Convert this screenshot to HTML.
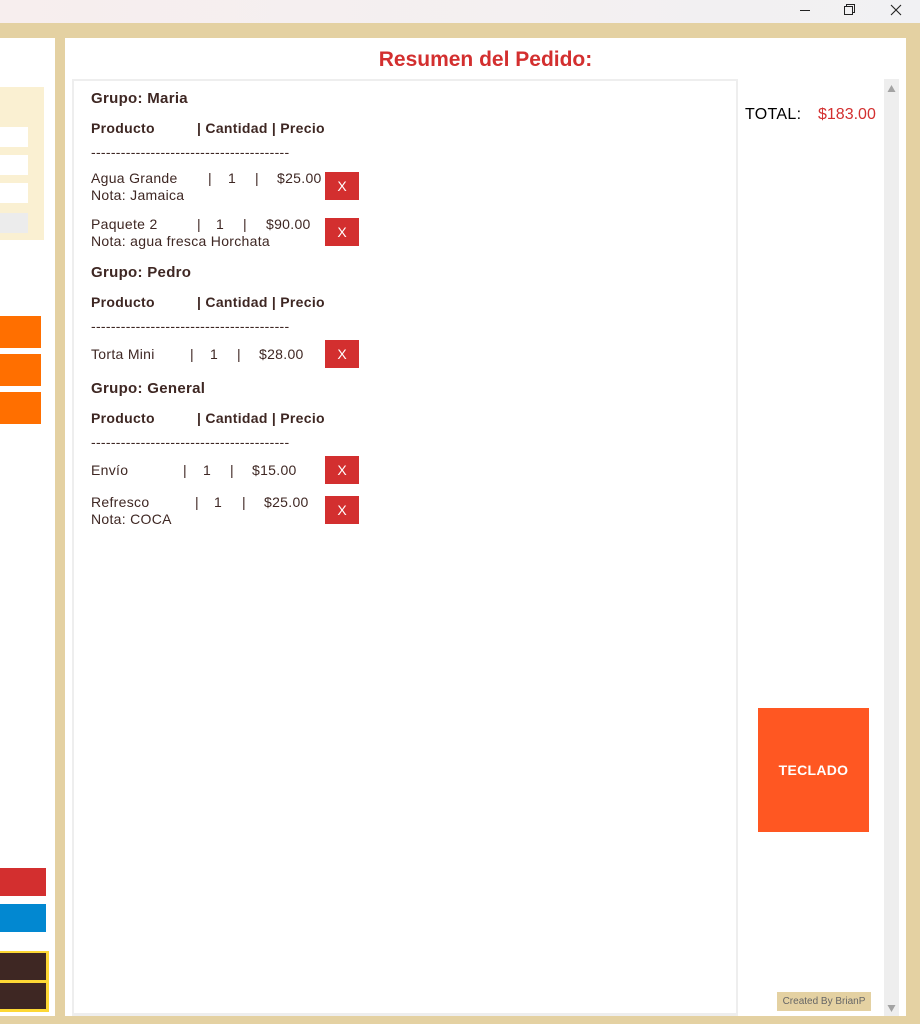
<!DOCTYPE html>
<html><head><meta charset="utf-8"><style>
*{margin:0;padding:0;box-sizing:border-box}
body{width:920px;height:1024px;position:relative;overflow:hidden;background:#e4d1a2;font-family:"Liberation Sans",sans-serif;color:#3e2723}
div,span{position:absolute}
.t{font-size:14px;line-height:16px;white-space:nowrap;letter-spacing:0.3px}
.b{font-weight:bold}
.g{font-size:15px;font-weight:bold;line-height:18px;letter-spacing:0.3px}
.x{width:34px;height:28px;background:#d32f2f;color:#fff;font-size:14px;text-align:center;line-height:29px;left:325px}
</style></head><body>
<div style="left:0;top:0;width:920px;height:23px;background:linear-gradient(90deg,#f7eeee,#f1f1f3)"></div>
<svg style="position:absolute;left:795px;top:4px" width="110" height="14">
<line x1="5" y1="6.5" x2="15" y2="6.5" stroke="#222" stroke-width="1"/>
<rect x="49.5" y="2.5" width="8" height="8" fill="none" stroke="#222"/>
<path d="M51.5 2.5V0.5H59.5V8.5H57.5" fill="none" stroke="#222"/>
<path d="M96 1L106 11M106 1L96 11" stroke="#222" stroke-width="1.1"/>
</svg>
<div style="left:0;top:38px;width:55px;height:978px;background:#fff"></div>
<div style="left:0;top:87px;width:44px;height:153px;background:#faf0d2"></div>
<div style="left:0;top:127px;width:28px;height:20px;background:#fff"></div>
<div style="left:0;top:155px;width:28px;height:20px;background:#fff"></div>
<div style="left:0;top:183px;width:28px;height:20px;background:#fff"></div>
<div style="left:0;top:213px;width:28px;height:20px;background:#ececec"></div>
<div style="left:0;top:316px;width:41px;height:32px;background:#ff6f00"></div>
<div style="left:0;top:354px;width:41px;height:32px;background:#ff6f00"></div>
<div style="left:0;top:392px;width:41px;height:32px;background:#ff6f00"></div>
<div style="left:0;top:868px;width:46px;height:28px;background:#d32f2f"></div>
<div style="left:0;top:904px;width:46px;height:28px;background:#0288d1"></div>
<div style="left:0;top:951px;width:49px;height:61px;background:#fdd835"></div>
<div style="left:0;top:953px;width:46px;height:27px;background:#3e2723"></div>
<div style="left:0;top:983px;width:46px;height:26px;background:#3e2723"></div>

<div style="left:65px;top:38px;width:841px;height:978px;background:#fff"></div>
<div style="left:65px;top:48px;width:841px;text-align:center;color:#d32f2f;font-weight:bold;font-size:21px;line-height:24px">Resumen del Pedido:</div>
<div style="left:72px;top:79px;width:666px;height:937px;border:2px solid #eee;border-bottom-width:3px"></div>
<div style="left:884px;top:79px;width:15px;height:937px;background:#eee"></div>
<svg style="position:absolute;left:884px;top:80px" width="15" height="936"><path d="M3.5 12L7.5 5L11.5 12Z" fill="#a3a3a3"/><path d="M3.5 925L7.5 932L11.5 925Z" fill="#a3a3a3"/></svg>

<span class="t" style="left:745px;top:107px;font-size:16px;color:#000">TOTAL:</span>
<span class="t" style="left:818px;top:107px;font-size:16px;color:#d32f2f;letter-spacing:0">$183.00</span>
<div style="left:758px;top:708px;width:111px;height:124px;background:#ff5722;color:#fff;font-weight:bold;font-size:14px;text-align:center;line-height:124px;letter-spacing:0.3px">TECLADO</div>
<div style="left:777px;top:992px;width:94px;height:19px;background:#e4d1a2;color:#666;font-size:10px;text-align:center;line-height:19px">Created By BrianP</div>

<span class="g" style="left:91px;top:90px">Grupo: Maria</span>
<span class="t b" style="left:91px;top:120px">Producto</span><span class="t b" style="left:197px;top:120px">| Cantidad | Precio</span>
<span class="t" style="left:91px;top:144px">----------------------------------------</span>
<span class="t" style="left:91px;top:170px">Agua Grande</span><span class="t" style="left:208px;top:170px">|</span><span class="t" style="left:228px;top:170px">1</span><span class="t" style="left:255px;top:170px">|</span><span class="t" style="left:277px;top:170px">$25.00</span>
<span class="t" style="left:91px;top:187px">Nota: Jamaica</span>
<div class="x" style="top:172px">X</div>
<span class="t" style="left:91px;top:216px">Paquete 2</span><span class="t" style="left:197px;top:216px">|</span><span class="t" style="left:216px;top:216px">1</span><span class="t" style="left:243px;top:216px">|</span><span class="t" style="left:266px;top:216px">$90.00</span>
<span class="t" style="left:91px;top:233px">Nota: agua fresca Horchata</span>
<div class="x" style="top:218px">X</div>

<span class="g" style="left:91px;top:264px">Grupo: Pedro</span>
<span class="t b" style="left:91px;top:294px">Producto</span><span class="t b" style="left:197px;top:294px">| Cantidad | Precio</span>
<span class="t" style="left:91px;top:318px">----------------------------------------</span>
<span class="t" style="left:91px;top:346px">Torta Mini</span><span class="t" style="left:190px;top:346px">|</span><span class="t" style="left:210px;top:346px">1</span><span class="t" style="left:237px;top:346px">|</span><span class="t" style="left:259px;top:346px">$28.00</span>
<div class="x" style="top:340px">X</div>

<span class="g" style="left:91px;top:380px">Grupo: General</span>
<span class="t b" style="left:91px;top:410px">Producto</span><span class="t b" style="left:197px;top:410px">| Cantidad | Precio</span>
<span class="t" style="left:91px;top:434px">----------------------------------------</span>
<span class="t" style="left:91px;top:462px">Envío</span><span class="t" style="left:183px;top:462px">|</span><span class="t" style="left:203px;top:462px">1</span><span class="t" style="left:230px;top:462px">|</span><span class="t" style="left:252px;top:462px">$15.00</span>
<div class="x" style="top:456px">X</div>
<span class="t" style="left:91px;top:494px">Refresco</span><span class="t" style="left:195px;top:494px">|</span><span class="t" style="left:214px;top:494px">1</span><span class="t" style="left:242px;top:494px">|</span><span class="t" style="left:264px;top:494px">$25.00</span>
<span class="t" style="left:91px;top:511px">Nota: COCA</span>
<div class="x" style="top:496px">X</div>
</body></html>
